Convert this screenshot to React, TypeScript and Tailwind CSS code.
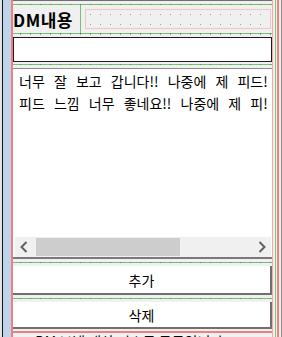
import React from "react";

const GreenLine = () => (
  <div className="h-px bg-[#78be78] flex pl-[7px] gap-[9px] overflow-hidden shrink-0">
    {Array.from({ length: 26 }).map((_, i) => (
      <div key={i} className="w-px h-px bg-[#4d8f4d] shrink-0" />
    ))}
  </div>
);

const DotRow = ({ count, className }: { count: number; className: string }) => (
  <div className={"flex gap-[9px] overflow-hidden shrink-0 h-px " + className}>
    {Array.from({ length: count }).map((_, i) => (
      <div key={i} className="w-px h-px bg-[#a0a0a0] shrink-0" />
    ))}
  </div>
);

const Chevron = ({ dir }: { dir: "l" | "r" }) => (
  <svg width="8" height="12" viewBox="0 0 8 12">
    <polyline
      points={dir === "l" ? "6.5,1 1.5,6 6.5,11" : "1.5,1 6.5,6 1.5,11"}
      fill="none"
      stroke="#606060"
      strokeWidth="2"
    />
  </svg>
);

export default function App() {
  return (
    <div className="w-[282px] h-[337px] overflow-hidden flex bg-[#f0f0f0] font-['Noto_Sans_CJK_KR','Liberation_Sans',sans-serif] text-black">
      {/* left strip */}
      <div className="flex shrink-0 h-full">
        <div className="w-[2px] bg-[#e4e4e4]" />
        <div className="w-px bg-[#111]" />
        <div className="w-[8px] bg-[#bed4ea]" />
        <div className="w-[2px] bg-[#f08080]" />
      </div>

      {/* main */}
      <div className="w-[259px] shrink-0 flex flex-col">
        <div className="h-px bg-[#6e6e6e] shrink-0" />
        <div className="h-[3px] shrink-0" />
        <GreenLine />
        <div className="h-[28px] flex shrink-0">
          <div className="w-[67px] flex items-center text-[17px] font-bold leading-none tracking-[0.5px] whitespace-nowrap">
            DM내용
          </div>
          <div className="w-px bg-[#78be78]" />
          <div className="w-[4px]" />
          <div className="mt-[4px] h-[20px] w-[186px] border border-[#f2c4c4] flex flex-col">
            <div className="h-[4px]" />
            <DotRow count={19} className="pl-[4px]" />
            <div className="h-[9px]" />
            <DotRow count={19} className="pl-[4px]" />
          </div>
        </div>
        <GreenLine />
        <DotRow count={26} className="pl-[7px]" />
        <div className="h-[2px] shrink-0" />
        <div className="h-[25px] border border-[#1a1a1a] bg-white shrink-0" />
        <div className="h-[2px] shrink-0" />
        <GreenLine />
        <div className="h-[3px] shrink-0" />

        {/* textarea */}
        <div className="h-[191px] shrink-0 flex flex-col bg-white border-t border-b-2 border-t-[#8c8c8c] border-b-[#7a7a7a]">
          <div className="flex-1 overflow-hidden pl-[6px] pt-[1px] text-[14px] leading-[22px] whitespace-nowrap [word-spacing:6px]">
            <div>너무 잘 보고 갑니다!! 나중에 제 피드!</div>
            <div>피드 느낌 너무 좋네요!! 나중에 제 피!</div>
          </div>
          <div className="h-[20px] ml-[2px] mr-px flex bg-[#f0f0f0] shrink-0">
            <div className="w-[18px] flex items-center justify-center">
              <Chevron dir="l" />
            </div>
            <div className="w-[3px]" />
            <div className="w-[144px] bg-[#cdcdcd] my-px" />
            <div className="flex-1" />
            <div className="w-[18px] flex items-center justify-center">
              <Chevron dir="r" />
            </div>
          </div>
        </div>

        <div className="h-[3px] shrink-0" />
        <GreenLine />
        <div className="h-[3px] shrink-0" />
        <button className="h-[29px] shrink-0 bg-white border-r-2 border-b-2 border-[#707070] text-[14px] leading-none flex items-center justify-center">
          추가
        </button>
        <div className="h-[3px] shrink-0" />
        <GreenLine />
        <div className="h-[3px] shrink-0" />
        <button className="h-[27px] shrink-0 bg-white border-r-2 border-b-2 border-[#707070] text-[14px] leading-none flex items-center justify-center">
          삭제
        </button>
        <div className="h-[2px] shrink-0" />
        <div className="h-[2px] bg-[#f08080] shrink-0" />
        <div className="pl-[5px] text-[14px] leading-[16px] whitespace-nowrap overflow-hidden">
          ※ DM 보낼 대상 리스트 목록입니다
        </div>
      </div>

      {/* right strip */}
      <div className="flex shrink-0 h-full">
        <div className="w-px bg-[#f4a6a6]" />
        <div className="w-[2px] bg-[#f0f0f0]" />
        <div className="w-px bg-[#7bc47b]" />
        <div className="w-px bg-[#f0f0f0]" />
        <div className="w-[2px] bg-[#f08080]" />
        <div className="w-[2px] bg-[#f0f0f0]" />
        <div className="w-px bg-[#8a8a8a]" />
      </div>
    </div>
  );
}
